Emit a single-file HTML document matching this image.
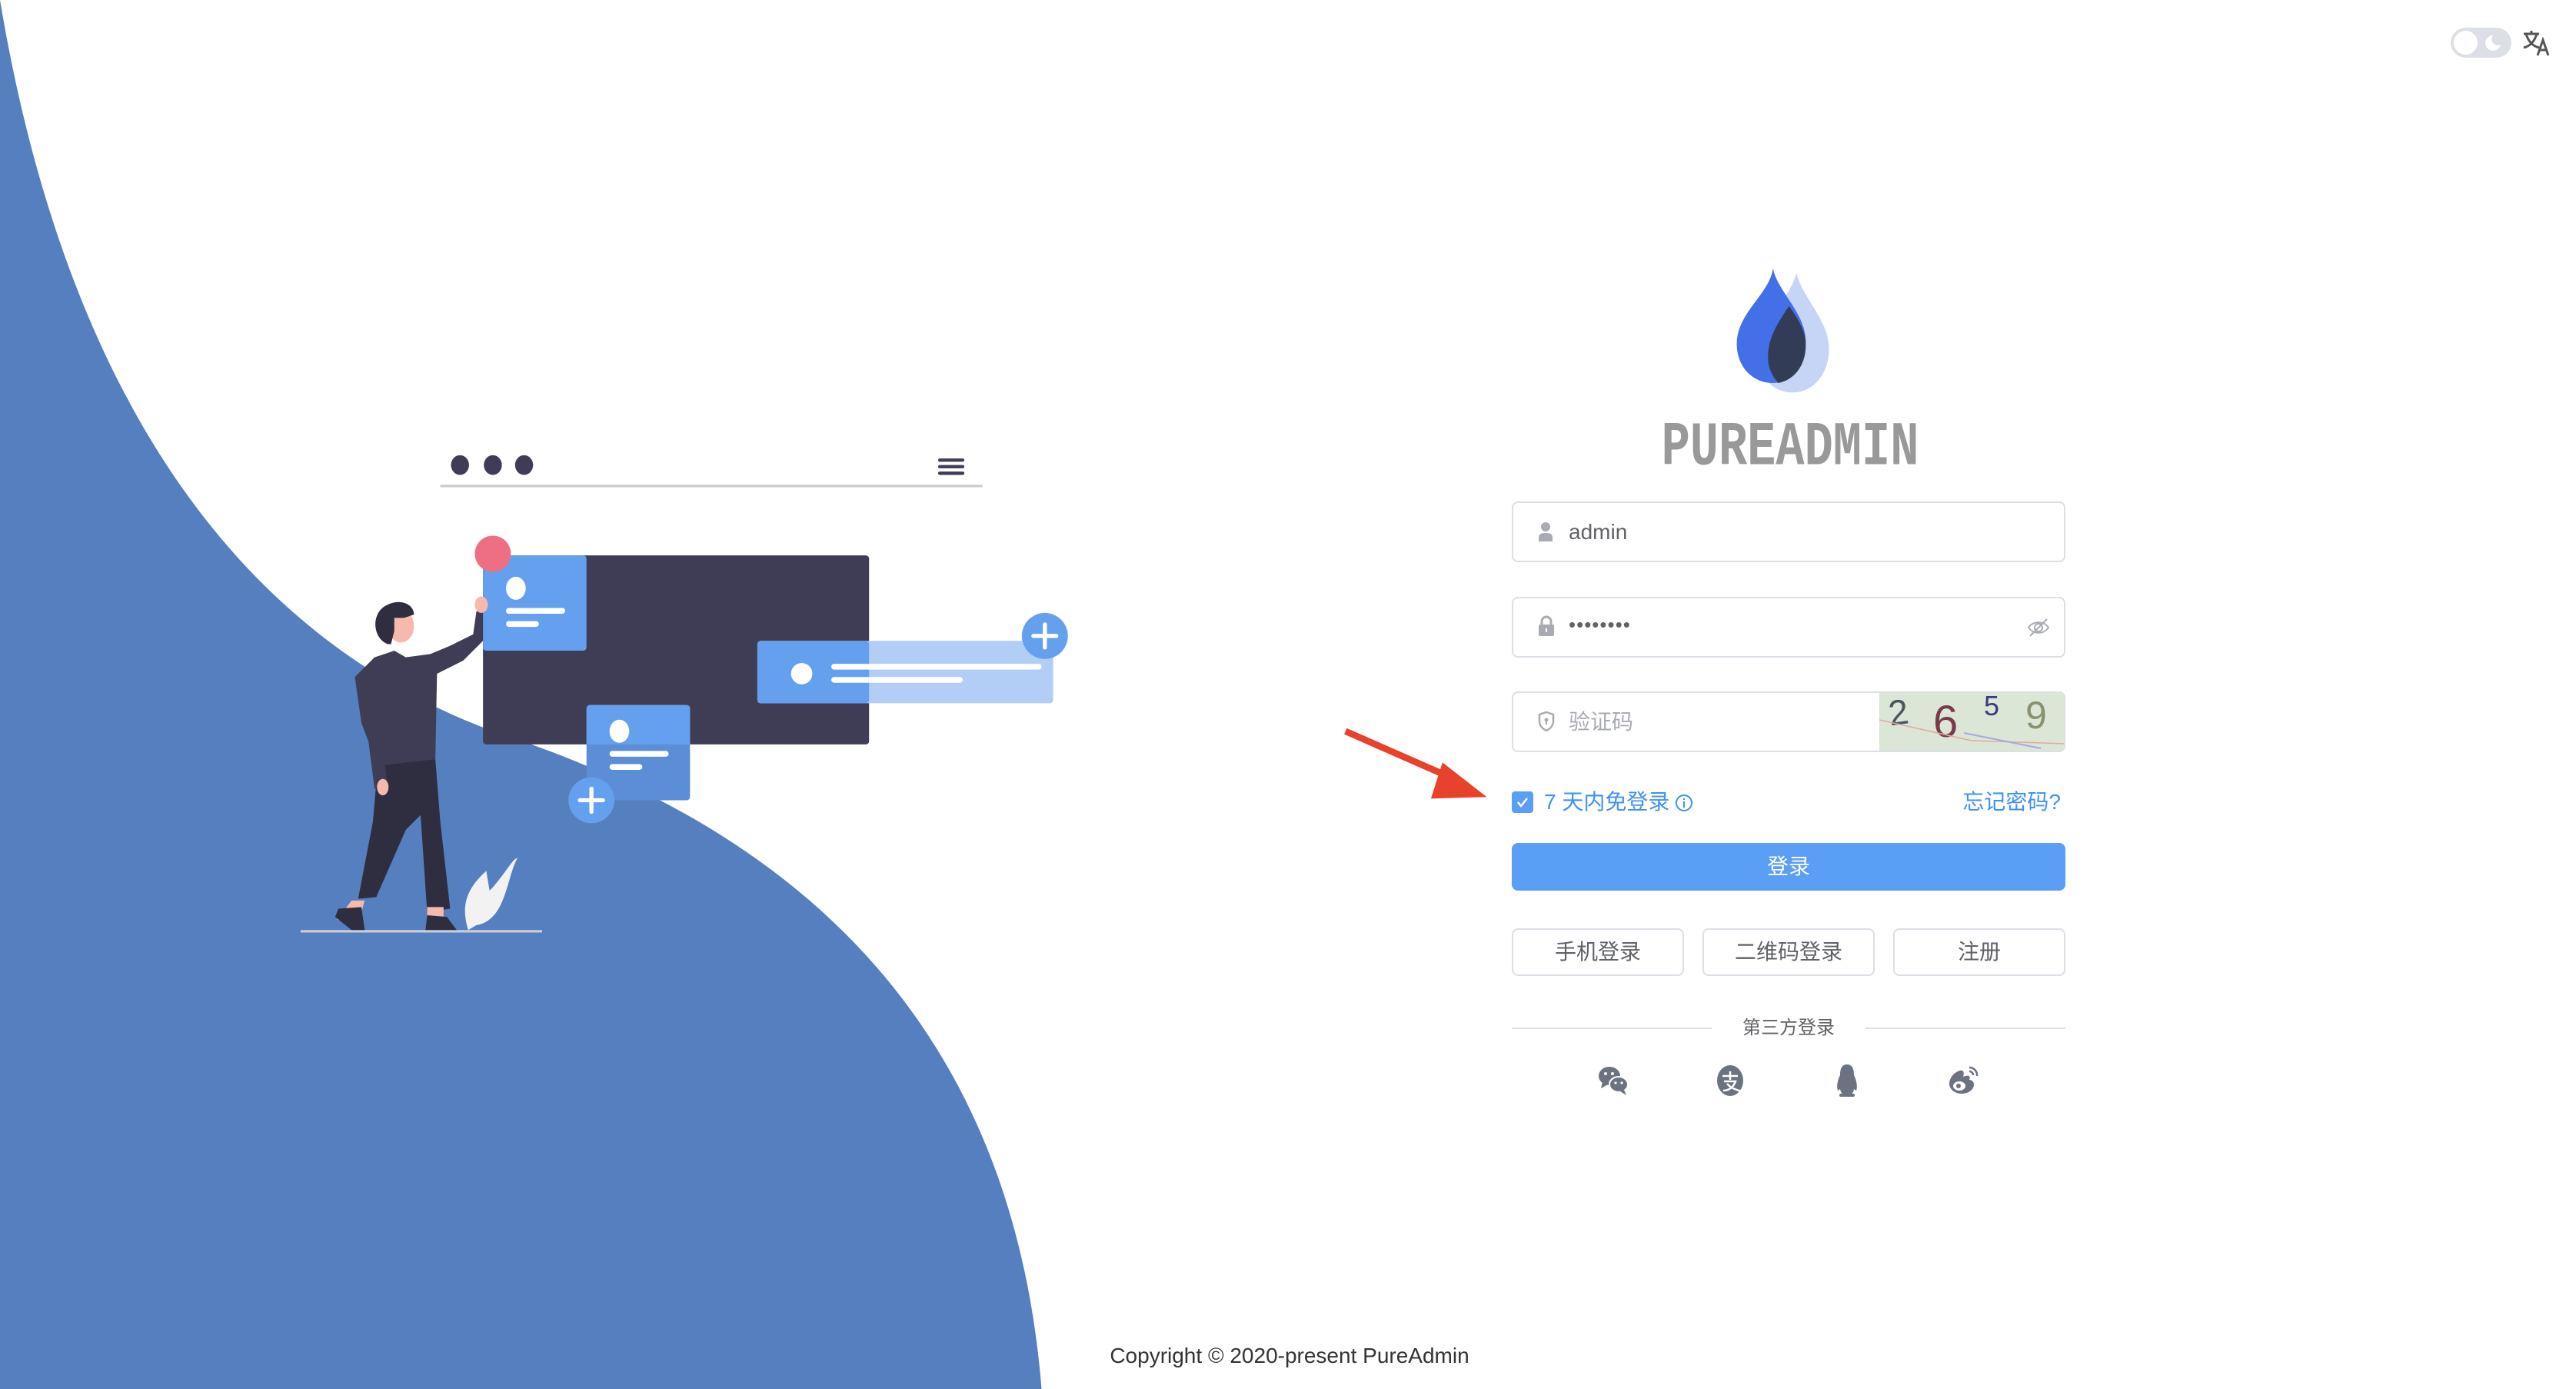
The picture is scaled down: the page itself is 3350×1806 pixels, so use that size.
<!DOCTYPE html>
<html><head><meta charset="utf-8">
<style>
html,body{margin:0;padding:0;}
body{width:3350px;height:1806px;position:relative;overflow:hidden;background:#fff;font-family:"Liberation Sans","Noto Sans CJK SC",sans-serif;}
.abs{position:absolute;}
.inp{position:absolute;left:1966px;width:716px;height:75px;border:2px solid #dcdfe6;border-radius:8px;box-sizing:content-box;}
.inp .t{position:absolute;left:72px;top:0;line-height:75px;font-size:28px;color:#606266;}
.btn{position:absolute;top:1207px;width:220px;height:58px;border:2px solid #dcdfe6;border-radius:8px;text-align:center;line-height:58px;font-size:28px;color:#606266;}
</style></head><body>
<svg class="abs" style="left:0;top:0" width="3350" height="1806" viewBox="0 0 1568 845.3" preserveAspectRatio="none">
<path d="M0,0 C35,210 125,380 300,445 C470,500 615,610 634,845.3 L0,845.3 Z" fill="#557fbe"/>
<ellipse cx="280" cy="283" rx="5.5" ry="6" fill="#3f3d56"/>
<ellipse cx="300" cy="283" rx="5.5" ry="6" fill="#3f3d56"/>
<ellipse cx="319" cy="283" rx="5.5" ry="6" fill="#3f3d56"/>
<rect x="268" y="295" width="330" height="1.5" fill="#ccc"/>
<rect x="571" y="279" width="16" height="2" rx="1" fill="#3f3d56"/>
<rect x="571" y="283" width="16" height="2" rx="1" fill="#3f3d56"/>
<rect x="571" y="287" width="16" height="2" rx="1" fill="#3f3d56"/>
<rect x="294" y="338" width="235" height="115" rx="2" fill="#3f3d56"/>
<rect x="294" y="338" width="63" height="58" rx="2" fill="#65a0ee"/>
<ellipse cx="314" cy="358" rx="6" ry="7" fill="#fff"/>
<rect x="308" y="370" width="36" height="3.5" rx="1.7" fill="#fff"/>
<rect x="308" y="378" width="20" height="3.5" rx="1.7" fill="#fff"/>
<circle cx="300" cy="337" r="11" fill="#ee6f84"/>
<rect x="461" y="390" width="180" height="38" rx="2" fill="#b2cdf6"/>
<rect x="461" y="390" width="68" height="38" rx="2" fill="#65a0ee"/>
<circle cx="488" cy="410" r="6.5" fill="#fff"/>
<rect x="506" y="404" width="128" height="3.5" rx="1.7" fill="#fff"/>
<rect x="506" y="412" width="80" height="3.5" rx="1.7" fill="#fff"/>
<circle cx="636" cy="387" r="14" fill="#65a0ee"/>
<path d="M636,380 V394 M629,387 H643" stroke="#fff" stroke-width="2.5" stroke-linecap="round"/>
<rect x="357" y="429" width="63" height="58" rx="2" fill="#5b8ed6"/>
<path d="M357,453 V431 a2,2 0 0 1 2,-2 H418 a2,2 0 0 1 2,2 V453 Z" fill="#65a0ee"/>
<ellipse cx="377" cy="445" rx="6" ry="7" fill="#fff"/>
<rect x="371" y="457" width="36" height="3.5" rx="1.7" fill="#fff"/>
<rect x="371" y="465" width="20" height="3.5" rx="1.7" fill="#fff"/>
<circle cx="360" cy="487" r="14" fill="#65a0ee"/>
<path d="M360,480 V494 M353,487 H367" stroke="#fff" stroke-width="2.5" stroke-linecap="round"/>
<rect x="183" y="566" width="147" height="1.5" fill="#ccd"/>
<path d="M300,540 C310,528 312,523 315,522 C308,535 308,560 290,563 L285,566 C280,550 285,540 296,530 L298,542 Z" fill="#f2f2f2"/>
<path d="M230,465 L265,462 L268,500 L274,553 L260,555 L256,496 L247,505 L229,546 L218,547 L227,500 Z" fill="#2f2e41"/>
<path d="M214,548 L222,548 L220,555 L205,560 Z" fill="#f6b9ad"/>
<path d="M206,553 L220,552 L222,566 L214,566 L204,558 Z" fill="#2f2e41"/>
<path d="M260,552 L270,552 L270,560 L260,560 Z" fill="#f6b9ad"/>
<path d="M260,557 L272,558 L278,566 L259,566 Z" fill="#2f2e41"/>
<path d="M228,400 L240,396 L247,400 L262,398 L274,393 L288,386 L290,372 L294,372 L294,390 L282,402 L266,410 L265,462 L230,466 L220,440 L216,412 Z" fill="#3f3d56"/>
<path d="M220,418 L228,420 L236,478 L228,480 Z" fill="#3f3d56"/>
<ellipse cx="233" cy="479" rx="3.5" ry="5" fill="#f6b9ad"/>
<ellipse cx="293" cy="368" rx="4" ry="5" fill="#f6b9ad"/>
<ellipse cx="244" cy="381" rx="8" ry="10" fill="#f6b9ad"/>
<path d="M236,392 C226,388 226,372 236,368 C244,364 252,368 252,374 L246,376 L240,376 L240,384 L238,392 Z" fill="#2f2e41"/>
<path d="M819,445 L885,474" stroke="#e8412c" stroke-width="4"/>
<path d="M878,464 L905,485 L871,486 Z" fill="#e8412c"/>
</svg>

<div class="abs" style="left:3187px;top:36px;width:79px;height:39px;border-radius:20px;background:#dcdfe6;"></div>
<div class="abs" style="left:3191px;top:40px;width:31px;height:31px;border-radius:50%;background:#fff;"></div>
<svg class="abs" style="left:3228px;top:42px" width="28" height="28" viewBox="0 0 28 28"><path d="M14,4 A10,10 0 1 0 24,16 A8,8 0 0 1 14,4 Z" fill="#fff"/></svg>
<svg class="abs" style="left:3280px;top:38px" width="38" height="36" viewBox="0 0 38 36" fill="none" stroke="#555" stroke-width="3"><path d="M2,6 H22 M12,2 V6 M5,6 C8,16 14,22 22,24 M19,6 C16,16 10,22 2,24"/><path d="M20,34 L27,14 L34,34 M23,27 H31"/></svg>

<svg class="abs" style="left:2250px;top:345px" width="140" height="170" viewBox="0 0 140 180">
<path d="M87,10 C95,45 132,75 132,115 C132,150 110,175 82,175 C55,175 35,155 35,120 C35,80 80,45 87,10 Z" fill="#c6d4f6"/>
<path d="M55,4 C60,35 100,65 100,105 C100,140 80,162 55,162 C27,162 5,140 5,108 C5,65 50,40 55,4 Z" fill="#4370e8"/>
<path d="M77,56 C90,75 100,90 100,110 C100,138 84,158 62,162 C52,150 48,140 48,125 C48,100 62,78 77,56 Z" fill="#323c56"/>
</svg>
<div class="abs" style="left:2100px;top:536px;width:456px;text-align:center;font-family:'Liberation Mono','DejaVu Sans Mono',monospace;font-weight:bold;font-size:62px;color:#999;transform:scaleY(1.3);transform-origin:50% 0;">PUREADMIN</div>

<div class="inp" style="top:652px;">
<svg class="abs" style="left:32px;top:24px" width="20" height="26" viewBox="0 0 20 26"><circle cx="10" cy="7" r="6" fill="#a8abb2"/><path d="M1,26 V21 C1,16 5,15 10,15 C15,15 19,16 19,21 V26 Z" fill="#a8abb2"/></svg>
<div class="t">admin</div></div>
<div class="inp" style="top:776px;">
<svg class="abs" style="left:32px;top:22px" width="22" height="28" viewBox="0 0 22 28"><path d="M5,12 V8 A6,6 0 0 1 17,8 V12" stroke="#a8abb2" stroke-width="3" fill="none"/><rect x="1" y="12" width="20" height="15" rx="2" fill="#a8abb2"/><rect x="10" y="17" width="2" height="5" fill="#fff"/></svg>
<div class="t" style="font-size:26px;letter-spacing:1px;top:-3px;">••••••••</div>
<svg class="abs" style="left:668px;top:23px" width="30" height="30" viewBox="0 0 30 30" fill="none" stroke="#a8abb2" stroke-width="2"><path d="M2,15 C8,6 22,6 28,15 C22,24 8,24 2,15 Z"/><circle cx="15" cy="15" r="5"/><path d="M4,26 L26,4"/></svg>
</div>
<div class="inp" style="top:899px;overflow:hidden;">
<svg class="abs" style="left:32px;top:23px" width="22" height="28" viewBox="0 0 22 28"><path d="M11,2 L20,5 V14 C20,20 15,24 11,26 C7,24 2,20 2,14 V5 Z" stroke="#a8abb2" stroke-width="2.5" fill="none"/><circle cx="11" cy="12" r="2.5" fill="#a8abb2"/><rect x="10" y="13" width="2" height="5" fill="#a8abb2"/></svg>
<div class="t" style="color:#a8abb2">验证码</div>
<div class="abs" style="left:476px;top:0;width:242px;height:75px;background:#dbe6d6;">
<span class="abs" style="left:12px;top:-2px;font-size:46px;color:#4a5560;transform:rotate(-8deg)">2</span>
<span class="abs" style="left:70px;top:4px;font-size:58px;color:#7a3a4a;">6</span>
<span class="abs" style="left:136px;top:-4px;font-size:36px;color:#3b3a7a;">5</span>
<span class="abs" style="left:190px;top:0px;font-size:50px;color:#8a9070;">9</span>
<svg class="abs" style="left:0;top:0" width="242" height="75"><path d="M0,35 L120,62 L242,66" stroke="#e4a8a0" stroke-width="1.5" fill="none"/><path d="M110,52 L210,72" stroke="#a8a8e0" stroke-width="2" fill="none"/></svg>
</div>
</div>

<div class="abs" style="left:1966px;top:1029px;width:28px;height:28px;border-radius:4px;background:#5a9ef5;"></div>
<svg class="abs" style="left:1966px;top:1029px" width="28" height="28" viewBox="0 0 28 28"><path d="M8,14 L12,19 L20,9" stroke="#fff" stroke-width="2.5" fill="none"/></svg>
<div class="abs" style="left:2008px;top:1023px;font-size:28px;line-height:40px;color:#3f91f3;">7 天内免登录</div>
<svg class="abs" style="left:2178px;top:1032px" width="24" height="24" viewBox="0 0 24 24" fill="none" stroke="#3f91f3" stroke-width="2"><circle cx="12" cy="12" r="10"/><path d="M12,10 V18 M12,6 V8"/></svg>
<div class="abs" style="left:2470px;width:210px;text-align:right;top:1023px;font-size:28px;line-height:40px;color:#3f91f3;">忘记密码?</div>

<div class="abs" style="left:1966px;top:1096px;width:720px;height:62px;border-radius:8px;background:#5a9ef5;color:#fff;font-size:28px;text-align:center;line-height:62px;">登录</div>

<div class="btn" style="left:1966px;">手机登录</div>
<div class="btn" style="left:2214px;">二维码登录</div>
<div class="btn" style="left:2462px;">注册</div>

<div class="abs" style="left:1966px;top:1336px;width:260px;height:2px;background:#dcdfe6;"></div>
<div class="abs" style="left:2426px;top:1336px;width:260px;height:2px;background:#dcdfe6;"></div>
<div class="abs" style="left:2226px;width:200px;top:1320px;text-align:center;font-size:24px;line-height:34px;color:#606266;">第三方登录</div>

<svg class="abs" style="left:2078px;top:1385px" width="42" height="40" viewBox="0 0 42 40" fill="#6b7280"><ellipse cx="15" cy="14" rx="14" ry="12"/><path d="M6,22 L4,30 L13,25 Z"/><ellipse cx="27" cy="25" rx="12" ry="10" stroke="#fff" stroke-width="2"/><path d="M34,32 L37,39 L29,34 Z"/><circle cx="10" cy="11" r="2" fill="#fff"/><circle cx="19" cy="11" r="2" fill="#fff"/><circle cx="23" cy="23" r="1.6" fill="#fff"/><circle cx="31" cy="23" r="1.6" fill="#fff"/></svg>
<svg class="abs" style="left:2231px;top:1384px" width="38" height="42" viewBox="0 0 38 42"><ellipse cx="19" cy="21" rx="17" ry="20" fill="#6b7280"/><path d="M9,15 H29 M19,9 V20 M11,22 H26 C23,30 17,34 10,34 M15,25 C20,31 27,33 34,35" stroke="#fff" stroke-width="2.5" fill="none"/></svg>
<svg class="abs" style="left:2387px;top:1382px" width="30" height="46" viewBox="0 0 30 46"><path d="M15,2 C7,2 6,10 6,16 C3,22 1,30 3,36 L6,34 C7,40 10,42 15,42 C20,42 23,40 24,34 L27,36 C29,30 27,22 24,16 C24,10 23,2 15,2 Z" fill="#6b7280"/><rect x="5" y="40" width="20" height="4" rx="2" fill="#6b7280"/></svg>
<svg class="abs" style="left:2533px;top:1384px" width="42" height="40" viewBox="0 0 42 40"><path d="M16,8 C8,10 2,18 2,25 C2,33 10,38 18,38 C28,38 34,32 34,26 C34,21 29,20 28,20 C30,15 27,13 20,16 C22,10 20,7 16,8 Z" fill="#6b7280"/><ellipse cx="15" cy="28" rx="8" ry="6" fill="#fff"/><circle cx="14" cy="28" r="3" fill="#6b7280"/><path d="M28,4 A10,10 0 0 1 38,15 M28,9 A5,5 0 0 1 33,14" stroke="#6b7280" stroke-width="2.5" fill="none"/></svg>

<div class="abs" style="left:1300px;width:754px;top:1745px;text-align:center;font-size:28px;line-height:36px;color:#333;">Copyright © 2020-present PureAdmin</div>
</body></html>
